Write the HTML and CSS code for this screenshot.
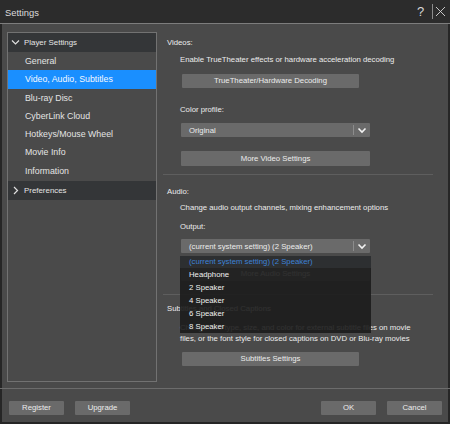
FILE: index.html
```html
<!DOCTYPE html>
<html>
<head>
<meta charset="utf-8">
<link rel="stylesheet" href="styles.css">
</head>
<body>
<div class="window">
  <div class="titlebar">
    <span class="title">Settings</span>
    <div class="tb-actions">
      <span class="help">?</span>
      <span class="tb-sep"></span>
      <svg class="close" width="11" height="11" viewBox="0 0 11 11"><path d="M1 1L10 10M10 1L1 10" stroke="#d8d8d8" stroke-width="0.9" fill="none"/></svg>
    </div>
  </div>
  <div class="main">
    <div class="sidebar">
      <div class="group-head">
        <svg class="chev" width="9" height="9" viewBox="0 0 9 9"><path d="M1 2.5L4.5 6L8 2.5" stroke="#e0e0e0" stroke-width="1.2" fill="none"/></svg>
        <span>Player Settings</span>
      </div>
      <div class="item">General</div>
      <div class="item selected">Video, Audio, Subtitles</div>
      <div class="item">Blu-ray Disc</div>
      <div class="item">CyberLink Cloud</div>
      <div class="item">Hotkeys/Mouse Wheel</div>
      <div class="item">Movie Info</div>
      <div class="item">Information</div>
      <div class="group-head pref">
        <svg class="chev" width="9" height="9" viewBox="0 0 9 9"><path d="M3 1L6.5 4.5L3 8" stroke="#e0e0e0" stroke-width="1.2" fill="none"/></svg>
        <span>Preferences</span>
      </div>
    </div>
    <div class="content">
      <div class="heading h-videos">Videos:</div>
      <div class="line l-enable">Enable TrueTheater effects or hardware acceleration decoding</div>
      <div class="btn wide b-tt">TrueTheater/Hardware Decoding</div>
      <div class="line l-color">Color profile:</div>
      <div class="select s-color">
        <span class="sel-text">Original</span>
        <span class="sel-div"></span>
        <svg class="sel-arrow" width="10" height="7" viewBox="0 0 10 7"><path d="M1.5 1.5L5 5L8.5 1.5" stroke="#f2f2f2" stroke-width="1.6" fill="none"/></svg>
      </div>
      <div class="btn full b-mvs">More Video Settings</div>
      <div class="sep s-1"></div>
      <div class="heading h-audio">Audio:</div>
      <div class="line l-change">Change audio output channels, mixing enhancement options</div>
      <div class="line l-output">Output:</div>
      <div class="select-wrap">
        <div class="select s-output">
          <span class="sel-text">(current system setting) (2 Speaker)</span>
          <span class="sel-div"></span>
          <svg class="sel-arrow" width="10" height="7" viewBox="0 0 10 7"><path d="M1.5 1.5L5 5L8.5 1.5" stroke="#f2f2f2" stroke-width="1.6" fill="none"/></svg>
        </div>
        <div class="dropdown">
          <div class="opt current">(current system setting) (2 Speaker)</div>
          <div class="opt">Headphone</div>
          <div class="opt">2 Speaker</div>
          <div class="opt">4 Speaker</div>
          <div class="opt">6 Speaker</div>
          <div class="opt">8 Speaker</div>
        </div>
      </div>
      <div class="btn full b-mas">More Audio Settings</div>
      <div class="sep s-2"></div>
      <div class="heading h-subs">Subtitles and Closed Captions</div>
      <div class="para">Change font type, size, and color for external subtitle files on movie<br>files, or the font style for closed captions on DVD or Blu-ray movies</div>
      <div class="btn wide b-subs">Subtitles Settings</div>
    </div>
  </div>
  <div class="footer">
    <div class="fbtn">Register</div>
    <div class="fbtn">Upgrade</div>
    <div class="spacer"></div>
    <div class="fbtn">OK</div>
    <div class="fbtn">Cancel</div>
  </div>
</div>
</body>
</html>
```

FILE: styles.css
```css
* { box-sizing: border-box; }
html, body { margin: 0; padding: 0; }
body {
  font-family: "Liberation Sans", Arial, sans-serif;
  color: #ececec;
  background: #262626;
}
.window {
  width: 450px;
  height: 424px;
  background: #4a4a4a;
  border: 2px solid #262626;
  border-top: 0;
  display: flex;
  flex-direction: column;
}
.titlebar {
  height: 24px;
  background: #2c2c2c;
  border-bottom: 1px solid #7d7d7d;
  display: flex;
  align-items: center;
  padding-left: 5px;
  margin: 0 -2px;
  padding-right: 3px;
}
.title {
  font-size: 9.4px;
  color: #dcdcdc;
  flex: 1;
  padding-top: 1px;
}
.tb-actions {
  display: flex;
  align-items: center;
}
.help {
  font-size: 13px;
  color: #d8d8d8;
  width: 10px;
  margin-right: 5px;
}
.tb-sep {
  width: 1px;
  height: 15px;
  background: #8a8a8a;
  margin-right: 2px;
}
.close { display: block; margin-right: 1px; }

.main {
  height: 364px;
  display: flex;
}
.sidebar {
  margin: 8px 0 0 5px;
  width: 150px;
  height: 350px;
  border: 1px solid #727272;
  font-size: 8.8px;
}
.group-head {
  height: 19px;
  background: #343638;
  display: flex;
  align-items: center;
  padding-left: 3px;
  font-size: 7.9px;
  color: #e4e4e4;
}
.group-head .chev { margin-right: 4px; }
.group-head.pref { margin-top: 1px; }
.item {
  height: 18.3px;
  line-height: 18.3px;
  padding-left: 17px;
  color: #e4e4e4;
}
.item.selected { background: #1a8fff; color: #f4f8ff; }

.content {
  position: relative;
  margin-left: 6px;
  width: 270px;
  padding-top: 13px;
  font-size: 7.75px;
}
.heading, .line {
  height: 12px;
  line-height: 12px;
  white-space: nowrap;
}
.heading { padding-left: 4px; }
.line { padding-left: 17px; }
.l-enable { margin-top: 5px; }
.b-tt { margin-top: 8px; }
.l-color { margin-top: 16px; }
.s-color { margin-top: 7px; }
.b-mvs { margin-top: 14px; }
.s-1 { margin-top: 8px; }
.h-audio { margin-top: 11px; }
.l-change { margin-top: 4px; }
.l-output { margin-top: 7px; }
.select-wrap { position: relative; margin-top: 6px; }
.b-mas { margin-top: 13px; }
.s-2 { margin-top: 13px; }
.h-subs { margin-top: 8px; }
.para { margin-top: 7px; padding-left: 17px; line-height: 11px; white-space: nowrap; }
.b-subs { margin-top: 8px; }

.btn {
  height: 15px;
  background: #6a6a6a;
  color: #ececec;
  text-align: center;
  line-height: 15px;
  margin-left: 18px;
  border-radius: 1px;
}
.btn.wide { width: 177px; margin-left: 19px; height: 14px; line-height: 14px; }
.btn.full { width: 189px; }
.select {
  margin-left: 18px;
  width: 189px;
  height: 14px;
  background: #6a6a6a;
  display: flex;
  align-items: center;
  padding-left: 8px;
  border-radius: 1px;
}
.sel-text { flex: 1; white-space: nowrap; color: #ececec; }
.sel-div { width: 1px; height: 10px; background: #8c8c8c; margin-right: 3px; }
.sel-arrow { display: block; margin-right: 3px; }
.sep {
  height: 1px;
  background: #5e5e5e;
  width: 270px;
}
.dropdown {
  position: absolute;
  left: 17px;
  top: 17px;
  width: 191px;
  background: rgba(28, 28, 28, 0.9);
  z-index: 2;
}
.opt {
  height: 13px;
  line-height: 13px;
  padding-left: 9px;
  color: #f0f0f0;
  white-space: nowrap;
}
.opt.current {
  height: 12px;
  line-height: 12px;
  background: rgba(46, 48, 51, 0.95);
  color: #3d82d6;
}

.footer {
  flex: 1;
  border-top: 1px solid #6c6c6c;
  margin: 0 -2px;
  padding: 12px 9px 0 9px;
  display: flex;
  align-items: flex-start;
  gap: 11px;
  font-size: 7.75px;
}
.spacer { flex: 1; }
.fbtn {
  width: 55px;
  height: 14px;
  line-height: 14px;
  text-align: center;
  background: #6a6a6a;
  color: #ececec;
  border-radius: 1px;
}
.fbtn:last-child { margin-right: -1px; }
```
